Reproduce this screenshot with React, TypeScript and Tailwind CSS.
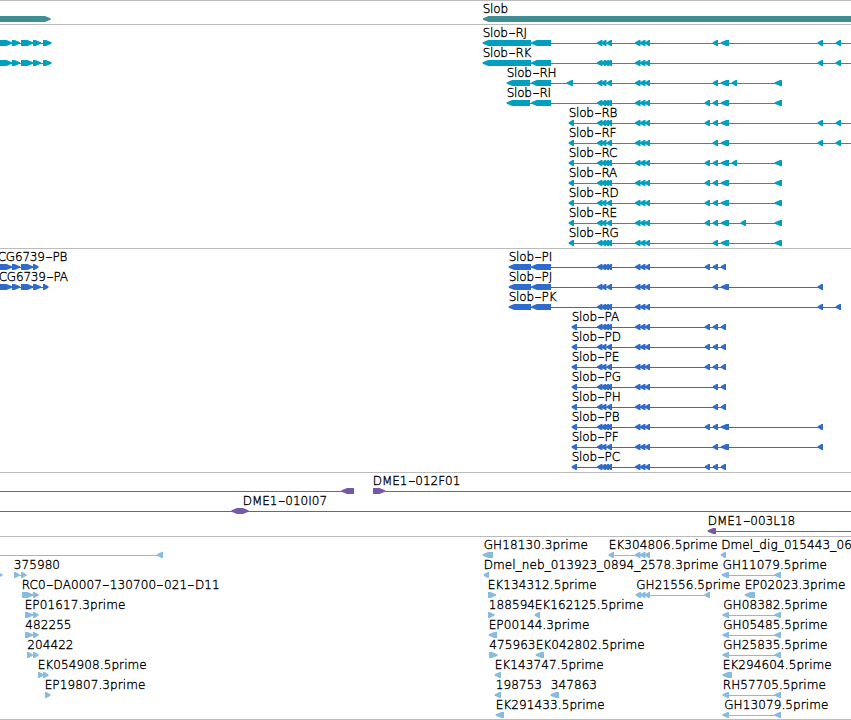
import React from "react";

type Dir = "l" | "r" | "b";
type Exon = [number, number, Dir?];
interface Feature {
  row: number;
  label?: string;
  x?: number;
  line?: [number, number];
  exons: Exon[];
}

// Exon clusters shared by the Slob isoforms
const C1N: Exon[] = [[597, 602.5], [601.5, 606.5], [606.5, 612]];
const C1W: Exon[] = [[597, 602.5], [601.5, 606], [604, 609], [606.5, 612]];
const C2: Exon[] = [[635, 640.5], [640, 645.5], [645, 650]];
const E705: Exon = [704.7, 710];
const E713: Exon = [712.7, 718];
const E721: Exon = [720.8, 729];
const E721S: Exon = [720.8, 726];
const E732: Exon = [731.7, 737];
const E775: Exon = [774.7, 782];
const E818: Exon = [817.7, 823];
const E836: Exon = [835.7, 841];
const UTR = (a: number, b: number): Exon[] => [[a, b], [531.3, 551]];
const r = (a: number, b: number): Exon => [a, b, "r"];

const genes: Feature[] = [
  { row: 0, exons: [r(-9, 50.5)] },
  { row: 0, label: "Slob", x: 482, exons: [[483, 860]] },
];

const cgExons = [r(-9, 12), r(12, 20), r(21, 33), r(33, 41), r(43, 51.5)];

const transcripts: Feature[] = [
  { row: 0, line: [0, 51], exons: cgExons },
  { row: 1, line: [0, 51], exons: cgExons },
  { row: 0, label: "Slob-RJ", x: 482, line: [484, 851], exons: [...UTR(482.7, 531), ...C1N, ...C2, E713, E721, E818, E836] },
  { row: 1, label: "Slob-RK", x: 482, line: [484, 851], exons: [...UTR(482.7, 531), ...C1W, ...C2, E818, E836] },
  { row: 2, label: "Slob-RH", x: 506, line: [508, 782], exons: [...UTR(506.7, 530), [566.7, 573], ...C1N, ...C2, E713, E721, E732, E775] },
  { row: 3, label: "Slob-RI", x: 506, line: [508, 782], exons: [...UTR(506.7, 530), ...C1W, ...C2, E705, E713, E721, E775] },
  { row: 4, label: "Slob-RB", x: 568, line: [570, 851], exons: [[568.7, 574], ...C1W, ...C2, E705, E713, E721, E818, E836] },
  { row: 5, label: "Slob-RF", x: 568, line: [570, 851], exons: [[568.7, 574], ...C1N, ...C2, E713, E721, E818, E836] },
  { row: 6, label: "Slob-RC", x: 568, line: [570, 782], exons: [[568.7, 574], ...C1W, ...C2, E705, E713, E721, E732, E775] },
  { row: 7, label: "Slob-RA", x: 568, line: [570, 782], exons: [[568.7, 574], ...C1W, ...C2, E705, E713, E721, E775] },
  { row: 8, label: "Slob-RD", x: 568, line: [570, 782], exons: [[568.7, 574], ...C1N, ...C2, E705, E713, E721, E775] },
  { row: 9, label: "Slob-RE", x: 568, line: [570, 782], exons: [[568.7, 574], ...C1N, ...C2, E705, E713, E721, [740.7, 746], E775] },
  { row: 10, label: "Slob-RG", x: 568, line: [570, 782], exons: [[568.7, 574], ...C1W, ...C2, E713, E721, E775] },
];

const proteins: Feature[] = [
  { row: 0, label: "CG6739-PB", x: -3, line: [0, 38], exons: [r(-9, 12), r(12, 20), r(21, 33), r(33, 38.5)] },
  { row: 1, label: "CG6739-PA", x: -2, line: [0, 48], exons: [r(-9, 12), r(12, 20), r(21, 33), r(33, 41), r(43, 48.5)] },
  { row: 0, label: "Slob-PI", x: 508, line: [510, 726], exons: [...UTR(508.7, 531), ...C1W, ...C2, E705, E713, E721S] },
  { row: 1, label: "Slob-PJ", x: 508, line: [510, 823], exons: [...UTR(508.7, 531), ...C1N, ...C2, E713, E721, E818] },
  { row: 2, label: "Slob-PK", x: 508, line: [510, 841], exons: [...UTR(508.7, 531), ...C1W, ...C2, E818, E836] },
  { row: 3, label: "Slob-PA", x: 571, line: [573, 726], exons: [[571.7, 577], ...C1W, ...C2, E705, E713, E721S] },
  { row: 4, label: "Slob-PD", x: 571, line: [573, 726], exons: [[571.7, 577], ...C1N, ...C2, E705, E713, E721S] },
  { row: 5, label: "Slob-PE", x: 571, line: [573, 726], exons: [[571.7, 577], ...C1N, ...C2, E705, E713, E721S] },
  { row: 6, label: "Slob-PG", x: 571, line: [573, 726], exons: [[571.7, 577], ...C1W, ...C2, E713, E721S] },
  { row: 7, label: "Slob-PH", x: 571, line: [573, 726], exons: [[571.7, 577], ...C1N, ...C2, E713, E721S] },
  { row: 8, label: "Slob-PB", x: 571, line: [573, 823], exons: [[571.7, 577], ...C1W, ...C2, E705, E713, E721, E818] },
  { row: 9, label: "Slob-PF", x: 571, line: [573, 823], exons: [[571.7, 577], ...C1N, ...C2, E713, E721, E818] },
  { row: 10, label: "Slob-PC", x: 571, line: [573, 726], exons: [[571.7, 577], ...C1W, ...C2, E705, E713, E721S] },
];

const clones: Feature[] = [
  { row: 0, line: [0, 354], exons: [[341.5, 354]] },
  { row: 0, label: "DME1-012F01", x: 372, line: [373, 851], exons: [r(373, 385)] },
  { row: 1, label: "DME1-010I07", x: 242, line: [0, 851], exons: [[231.5, 248.5, "b"]] },
  { row: 2, label: "DME1-003L18", x: 707, line: [709, 851], exons: [[707.7, 716]] },
];

const ghPair = { line: [724, 780] as [number, number], exons: [[722.5, 729], [774.5, 781]] as Exon[] };

const ests: Feature[] = [
  { row: 0, line: [0, 163], exons: [[157, 163]] },
  { row: 0, label: "GH18130.3prime", x: 483, exons: [[482.7, 493]] },
  { row: 0, label: "EK304806.5prime", x: 608, line: [610, 650], exons: [[608.7, 614], ...C2] },
  { row: 0, label: "Dmel_dig_015443_06", x: 720.5, exons: [[720.8, 726]] },
  { row: 1, exons: [r(-4, 2.5)] },
  { row: 1, label: "375980", x: 13, line: [14, 26], exons: [r(14, 19.5), r(21, 26.5)] },
  { row: 1, label: "Dmel_neb_013923_0894_2578.3prime", x: 483, exons: [[483.7, 489]] },
  { row: 1, label: "GH11079.5prime", x: 722, line: [724, 780], exons: [[721.7, 729], [774.5, 781]] },
  { row: 2, label: "RC0-DA0007-130700-021-D11", x: 21, line: [22, 38], exons: [r(22, 33), r(33, 38.5)] },
  { row: 2, label: "EK134312.5prime", x: 487, exons: [r(488, 496)] },
  { row: 2, label: "GH21556.5prime", x: 635.5, line: [637, 710], exons: [[635.7, 641], [640, 645.5], [645, 650], [704.5, 710]] },
  { row: 2, label: "EP02023.3prime", x: 744, exons: [[744.7, 755]] },
  { row: 3, label: "EP01617.3prime", x: 24, line: [25, 38], exons: [r(25, 33), r(33, 38.5)] },
  { row: 3, label: "188594", x: 488, exons: [r(488, 494.5)] },
  { row: 3, label: "EK162125.5prime", x: 534, exons: [[534.7, 540]] },
  { row: 3, label: "GH08382.5prime", x: 722.5, ...ghPair },
  { row: 4, label: "482255", x: 24.5, line: [25, 38], exons: [r(25, 33), r(33, 38.5)] },
  { row: 4, label: "EP00144.3prime", x: 488, exons: [[488.7, 497]] },
  { row: 4, label: "GH05485.5prime", x: 722.5, ...ghPair },
  { row: 5, label: "204422", x: 26.5, line: [27, 38], exons: [r(27, 32.5), r(33, 38.5)] },
  { row: 5, label: "475963", x: 488.5, exons: [r(489, 497.5)] },
  { row: 5, label: "EK042802.5prime", x: 535, exons: [[535.7, 544]] },
  { row: 5, label: "GH25835.5prime", x: 722.5, ...ghPair },
  { row: 6, label: "EK054908.5prime", x: 37, line: [38, 48], exons: [r(38, 43.5), r(43, 48.5)] },
  { row: 6, label: "EK143747.5prime", x: 494, exons: [[494.7, 501]] },
  { row: 6, label: "EK294604.5prime", x: 722, exons: [[722.5, 732]] },
  { row: 7, label: "EP19807.3prime", x: 44, exons: [r(45, 50.5)] },
  { row: 7, label: "198753", x: 495, exons: [[494.7, 501]] },
  { row: 7, label: "347863", x: 550, exons: [[550.5, 559]] },
  { row: 7, label: "RH57705.5prime", x: 722, ...ghPair },
  { row: 8, label: "EK291433.5prime", x: 495, exons: [[495.7, 504]] },
  { row: 8, label: "GH13079.5prime", x: 723.5, ...ghPair },
];

// Blunt-tipped arrow covering a..b, six pixels tall
function points([a, b, dir = "l"]: Exon, top: number) {
  const head = Math.min(5.5, b - a - 1.3);
  const bot = top + 6;
  const t1 = top + 2.2;
  const t2 = top + 3.8;
  if (dir === "r") return `${a},${top} ${b - head},${top} ${b},${t1} ${b},${t2} ${b - head},${bot} ${a},${bot}`;
  if (dir === "b")
    return `${a},${t1} ${a + head},${top} ${b - head},${top} ${b},${t1} ${b},${t2} ${b - head},${bot} ${a + head},${bot} ${a},${t2}`;
  return `${a},${t1} ${a + head},${top} ${b},${top} ${b},${bot} ${a + head},${bot} ${a},${t2}`;
}

function Label({ text }: { text: string }) {
  return (
    <>
      {text.split(/(-)/).map((part, i) =>
        part === "-" ? (
          <span key={i} className="inline-block w-[7.8px] scale-x-[1.65] text-center">-</span>
        ) : (
          <span key={i}>{part}</span>
        )
      )}
    </>
  );
}

function Track({ features, className }: { features: Feature[]; className: string }) {
  return (
    <section className={`relative w-full shrink-0 overflow-hidden border-t border-[#bbbbbb] ${className}`}>
      <svg className="block h-full w-full" fill="currentColor">
        {features.map((f, i) => {
          const top = 15 + f.row * 20;
          return (
            <g key={i}>
              {f.line && <rect x={f.line[0]} y={top + 3} width={f.line[1] - f.line[0]} height={1} />}
              {f.exons.map((e, j) => (
                <polygon key={j} points={points(e, top)} />
              ))}
            </g>
          );
        })}
      </svg>
      {features.map((f, i) =>
        f.label ? (
          <span
            key={i}
            className="absolute ml-[0.7px] whitespace-nowrap text-[12px] leading-[14px] text-black [-webkit-text-stroke:0.35px_black]"
            style={{ left: f.x, top: 1 + f.row * 20 }}
          >
            <Label text={f.label} />
          </span>
        ) : null
      )}
    </section>
  );
}

export default function App() {
  return (
    <main className="flex h-[720px] w-[851px] flex-col overflow-hidden bg-white font-['DejaVu_Sans',sans-serif] font-extralight">
      <Track features={genes} className="h-[24px] tracking-[-0.2px] text-[#3f8d95]" />
      <Track features={transcripts} className="h-[224px] tracking-[-0.25px] text-[#009fc0]" />
      <Track features={proteins} className="h-[224px] tracking-[-0.2px] text-[#2f6bcd]" />
      <Track features={clones} className="h-[64px] text-[#7658a8]" />
      <Track features={ests} className="h-[183px] tracking-[0.1px] text-[#87bcde]" />
      <div className="h-px shrink-0 bg-[#bbbbbb]" />
    </main>
  );
}
